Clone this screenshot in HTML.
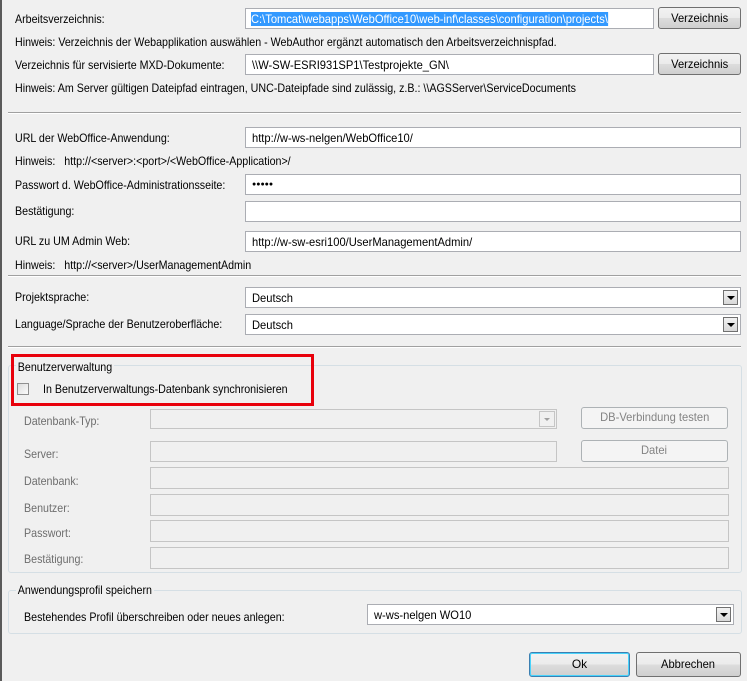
<!DOCTYPE html>
<html><head><meta charset="utf-8"><style>
*{box-sizing:border-box;margin:0;padding:0}
body{width:747px;height:681px;background:#f0f0f0;font-family:"Liberation Sans",sans-serif;font-size:12px;color:#000;position:relative;overflow:hidden}
.a{position:absolute;white-space:nowrap}
.l{position:absolute;white-space:nowrap;line-height:14px;transform:scaleX(0.89);transform-origin:0 0}
.t{display:inline-block;transform:scaleX(0.93);transform-origin:0 0}
.in{position:absolute;background:#fff;border:1px solid #abadb3;height:21px;padding:3px 6px;line-height:14px;white-space:nowrap}
.dis{position:absolute;background:#f0f0f0;border:1px solid #c5c5c5}
.btn{position:absolute;border:1px solid #707070;border-radius:3px;background:linear-gradient(#f2f2f2,#ebebeb 50%,#dddddd 50%,#cfcfcf);text-align:center;line-height:20px}
.dbtn{position:absolute;border:1px solid #adb2b5;border-radius:3px;background:#f4f4f4;color:#838383;text-align:center;line-height:19px}
.g{color:#6d6d6d}
.sep{position:absolute;left:8px;width:733px;height:0;border-top:1px solid #a0a0a0;border-bottom:1px solid #fff}
.dd{position:absolute;right:2px;top:2px;width:15px;height:15px;border:1px solid #707070;background:linear-gradient(#f2f2f2,#d8d8d8)}
.dd:after{content:"";position:absolute;left:3px;top:5px;border-left:4px solid transparent;border-right:4px solid transparent;border-top:4px solid #000}
.gb{position:absolute;border:1px solid #d5dfe5;border-radius:3px}
</style></head><body>
<div class="a" style="left:0;top:0;width:2px;height:681px;background:#5a5a5a"></div>

<div class="l" style="left:15px;top:12px">Arbeitsverzeichnis:</div>
<div class="in" style="left:245px;top:8px;width:409px;padding-left:5px"><span class="t" style="background:#3399ff;color:#fff">C:\Tomcat\webapps\WebOffice10\web-inf\classes\configuration\projects\</span></div>
<div class="btn" style="left:658px;top:7px;width:83px;height:22px"><span class="t" style="transform-origin:50% 0">Verzeichnis</span></div>
<div class="l" style="left:15px;top:35px">Hinweis: Verzeichnis der Webapplikation auswählen - WebAuthor ergänzt automatisch den Arbeitsverzeichnispfad.</div>
<div class="l" style="left:15px;top:58px">Verzeichnis für servisierte MXD-Dokumente:</div>
<div class="in" style="left:245px;top:54px;width:409px"><span class="t">\\W-SW-ESRI931SP1\Testprojekte_GN\</span></div>
<div class="btn" style="left:658px;top:53px;width:83px;height:22px"><span class="t" style="transform-origin:50% 0">Verzeichnis</span></div>
<div class="l" style="left:15px;top:81px">Hinweis: Am Server gültigen Dateipfad eintragen, UNC-Dateipfade sind zulässig, z.B.: \\AGSServer\ServiceDocuments</div>
<div class="sep" style="top:112px"></div>

<div class="l" style="left:15px;top:131px">URL der WebOffice-Anwendung:</div>
<div class="in" style="left:245px;top:127px;width:496px"><span class="t">http://w-ws-nelgen/WebOffice10/</span></div>
<div class="l" style="left:15px;top:154px">Hinweis:&nbsp;&nbsp; http://&lt;server&gt;:&lt;port&gt;/&lt;WebOffice-Application&gt;/</div>
<div class="l" style="left:15px;top:178px">Passwort d. WebOffice-Administrationsseite:</div>
<div class="in" style="left:245px;top:174px;width:496px;font-size:7px;line-height:14px">●●●●●</div>
<div class="l" style="left:15px;top:204px">Bestätigung:</div>
<div class="in" style="left:245px;top:201px;width:496px"></div>
<div class="l" style="left:15px;top:234px">URL zu UM Admin Web:</div>
<div class="in" style="left:245px;top:231px;width:496px"><span class="t">http://w-sw-esri100/UserManagementAdmin/</span></div>
<div class="l" style="left:15px;top:258px">Hinweis:&nbsp;&nbsp; http://&lt;server&gt;/UserManagementAdmin</div>
<div class="sep" style="top:275px"></div>

<div class="l" style="left:15px;top:290px">Projektsprache:</div>
<div class="in" style="left:245px;top:287px;width:496px"><span class="t">Deutsch</span><div class="dd"></div></div>
<div class="l" style="left:15px;top:317px">Language/Sprache der Benutzeroberfläche:</div>
<div class="in" style="left:245px;top:314px;width:496px"><span class="t">Deutsch</span><div class="dd"></div></div>
<div class="sep" style="top:346px"></div>

<div class="gb" style="left:8px;top:365px;width:734px;height:208px"></div>
<div class="l" style="left:16px;top:360px;background:#f0f0f0;padding:0 2px">Benutzerverwaltung</div>
<div class="a" style="left:17px;top:383px;width:12px;height:12px;border:1px solid #8f8f8f;background:linear-gradient(135deg,#dcdcdc,#fbfbfb)"></div>
<div class="l" style="left:43px;top:382px">In Benutzerverwaltungs-Datenbank synchronisieren</div>
<div class="a" style="left:11px;top:354px;width:303px;height:52px;border:3px solid #e8000b"></div>

<div class="l g" style="left:24px;top:414px">Datenbank-Typ:</div>
<div class="dis" style="left:150px;top:409px;width:407px;height:20px"><div style="position:absolute;right:1px;top:1px;width:16px;height:16px;border:1px solid #c5c5c5"></div><div style="position:absolute;right:6px;top:8px;border-left:3px solid transparent;border-right:3px solid transparent;border-top:3px solid #a0a0a0"></div></div>
<div class="dbtn" style="left:581px;top:407px;width:147px;height:22px"><span class="t" style="transform-origin:50% 0">DB-Verbindung testen</span></div>
<div class="l g" style="left:24px;top:447px">Server:</div>
<div class="dis" style="left:150px;top:441px;width:407px;height:21px"></div>
<div class="dbtn" style="left:581px;top:440px;width:147px;height:22px"><span class="t" style="transform-origin:50% 0">Datei</span></div>
<div class="l g" style="left:24px;top:474px">Datenbank:</div>
<div class="dis" style="left:150px;top:467px;width:579px;height:22px"></div>
<div class="l g" style="left:24px;top:501px">Benutzer:</div>
<div class="dis" style="left:150px;top:494px;width:579px;height:22px"></div>
<div class="l g" style="left:24px;top:526px">Passwort:</div>
<div class="dis" style="left:150px;top:520px;width:579px;height:22px"></div>
<div class="l g" style="left:24px;top:552px">Bestätigung:</div>
<div class="dis" style="left:150px;top:547px;width:579px;height:22px"></div>

<div class="gb" style="left:8px;top:590px;width:734px;height:44px"></div>
<div class="l" style="left:16px;top:583px;background:#f0f0f0;padding:0 2px">Anwendungsprofil speichern</div>
<div class="l" style="left:24px;top:610px">Bestehendes Profil überschreiben oder neues anlegen:</div>
<div class="in" style="left:367px;top:604px;width:367px"><span class="t">w-ws-nelgen WO10</span><div class="dd"></div></div>

<div class="btn" style="left:529px;top:652px;width:101px;height:25px;border-color:#3c7fb1;box-shadow:inset 0 0 0 1px #48d3fb;line-height:23px">Ok</div>
<div class="btn" style="left:636px;top:652px;width:105px;height:25px;line-height:23px"><span class="t" style="transform-origin:50% 0">Abbrechen</span></div>
</body></html>
